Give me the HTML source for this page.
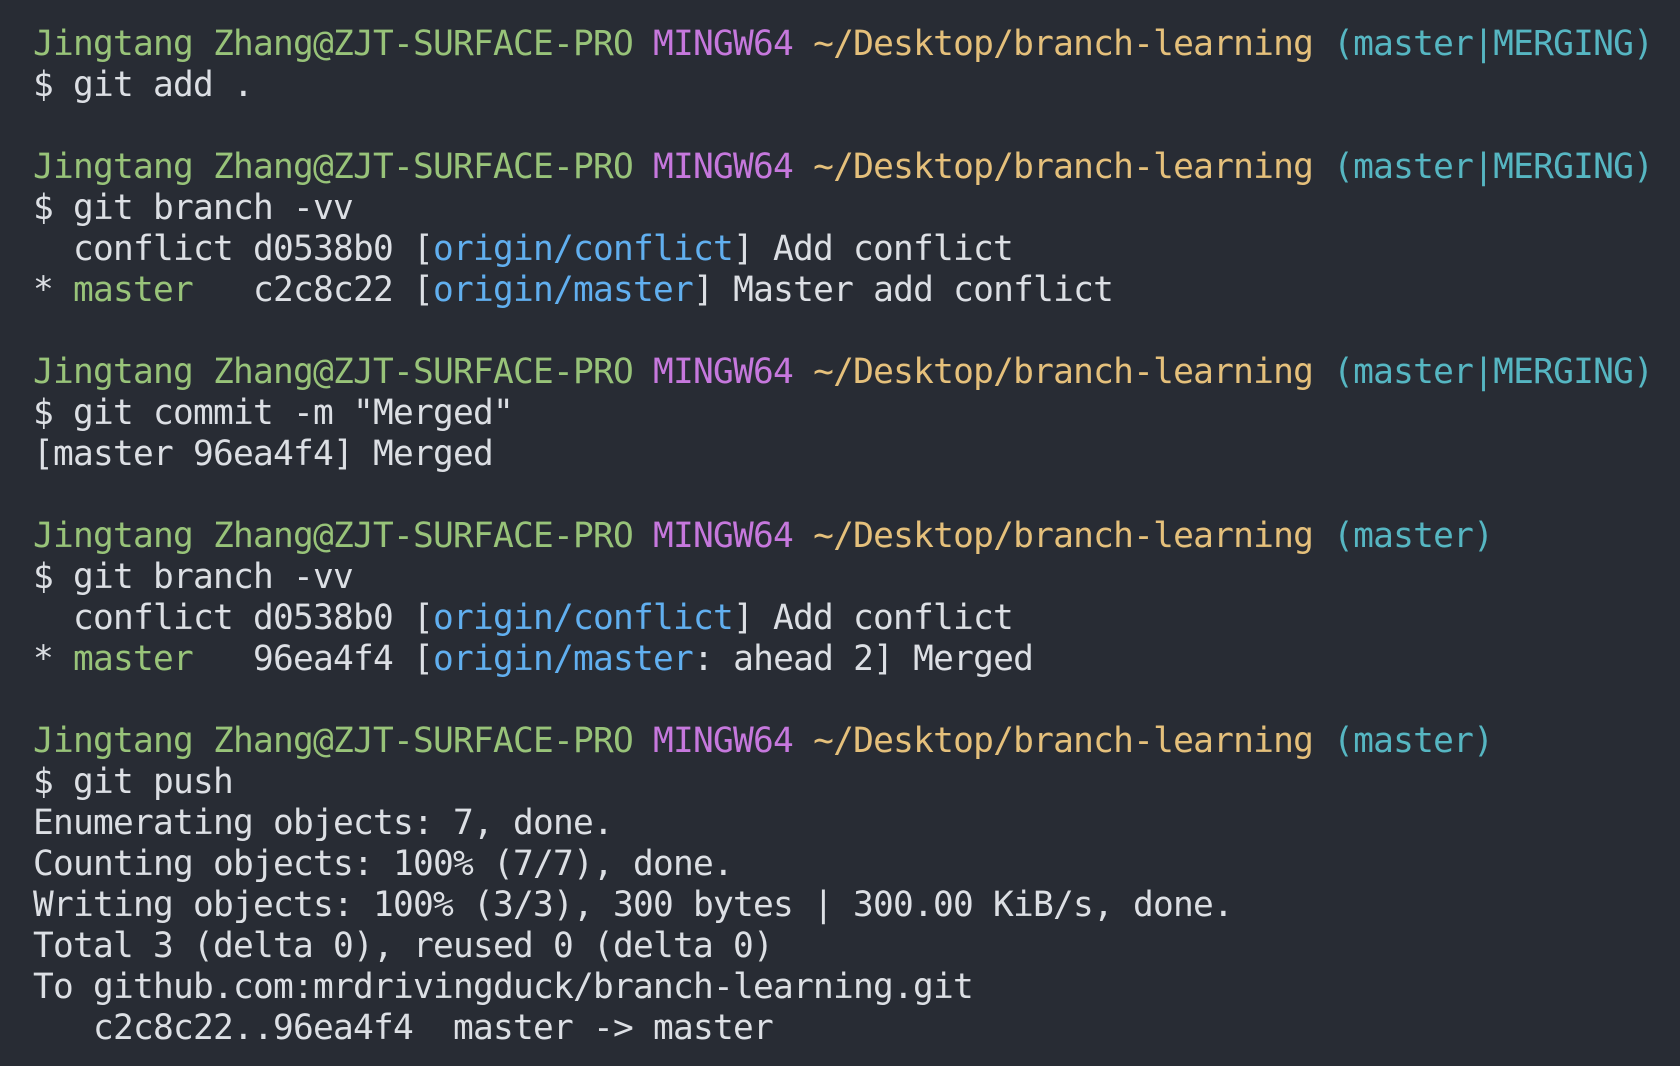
<!DOCTYPE html>
<html><head><meta charset="utf-8"><style>
html,body{margin:0;padding:0;background:#282c34;width:1680px;height:1066px;overflow:hidden}
pre{margin:0;position:absolute;left:33px;top:24px;font-family:"DejaVu Sans Mono","Liberation Mono",monospace;font-size:34.5px;letter-spacing:-0.77px;line-height:41px;color:#dcdfe4;white-space:pre}
.g{color:#98c379}.m{color:#c678dd}.y{color:#e5c07b}.c{color:#56b6c2}.b{color:#61afef}
</style></head><body><pre><span class="g">Jingtang Zhang@ZJT-SURFACE-PRO</span> <span class="m">MINGW64</span> <span class="y">~/Desktop/branch-learning</span> <span class="c">(master|MERGING)</span>
$ git add .

<span class="g">Jingtang Zhang@ZJT-SURFACE-PRO</span> <span class="m">MINGW64</span> <span class="y">~/Desktop/branch-learning</span> <span class="c">(master|MERGING)</span>
$ git branch -vv
  conflict d0538b0 [<span class="b">origin/conflict</span>] Add conflict
* <span class="g">master  </span> c2c8c22 [<span class="b">origin/master</span>] Master add conflict

<span class="g">Jingtang Zhang@ZJT-SURFACE-PRO</span> <span class="m">MINGW64</span> <span class="y">~/Desktop/branch-learning</span> <span class="c">(master|MERGING)</span>
$ git commit -m "Merged"
[master 96ea4f4] Merged

<span class="g">Jingtang Zhang@ZJT-SURFACE-PRO</span> <span class="m">MINGW64</span> <span class="y">~/Desktop/branch-learning</span> <span class="c">(master)</span>
$ git branch -vv
  conflict d0538b0 [<span class="b">origin/conflict</span>] Add conflict
* <span class="g">master  </span> 96ea4f4 [<span class="b">origin/master</span>: ahead 2] Merged

<span class="g">Jingtang Zhang@ZJT-SURFACE-PRO</span> <span class="m">MINGW64</span> <span class="y">~/Desktop/branch-learning</span> <span class="c">(master)</span>
$ git push
Enumerating objects: 7, done.
Counting objects: 100% (7/7), done.
Writing objects: 100% (3/3), 300 bytes | 300.00 KiB/s, done.
Total 3 (delta 0), reused 0 (delta 0)
To github.com:mrdrivingduck/branch-learning.git
   c2c8c22..96ea4f4  master -&gt; master</pre></body></html>
